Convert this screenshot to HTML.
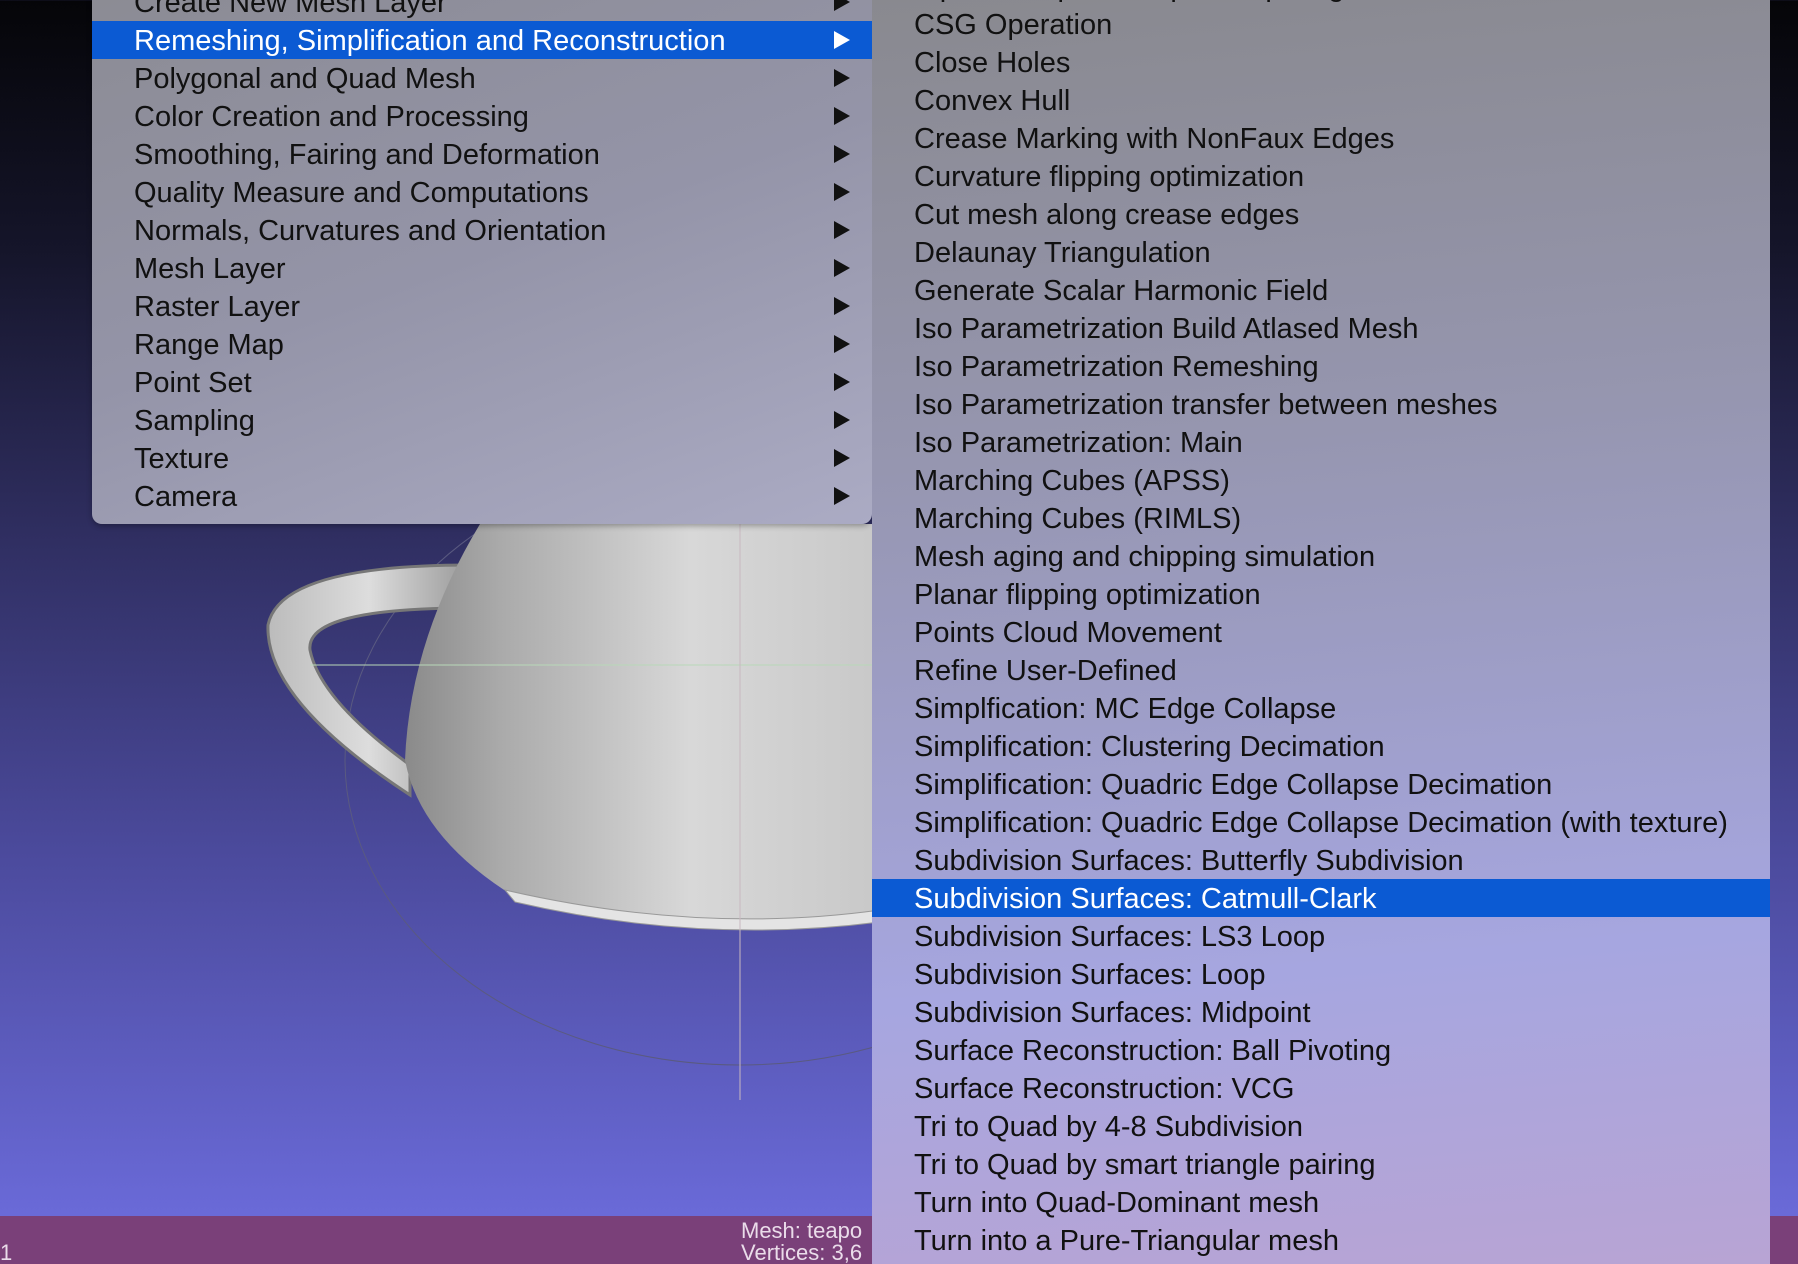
<!DOCTYPE html>
<html><head><meta charset="utf-8"><style>
*{margin:0;padding:0;box-sizing:border-box}
html,body{width:1798px;height:1264px;overflow:hidden}
body{position:relative;background:linear-gradient(180deg,#050508 0px,#15152a 250px,#2e2d5e 520px,#4b4a9c 850px,#6a6ad8 1216px);font-family:"Liberation Sans",sans-serif}
.status{position:absolute;left:0;top:1216px;width:1798px;height:48px;background:#7a4079;color:#eadcea;font-size:22px;line-height:22px}
.menu{position:absolute;overflow:hidden}
.row{position:absolute;left:0;right:0;height:38px;line-height:40px;font-size:29px;color:#111;white-space:nowrap}
.hl{background:#0b5ad3;color:#fff}
.arr{position:absolute;right:22px;top:10px;width:0;height:0;border-top:9px solid transparent;border-bottom:9px solid transparent;border-left:16px solid #111}
.hl .arr{border-left-color:#fff}
</style></head><body>
<svg width="1798" height="1264" style="position:absolute;left:0;top:0">
<defs>
<linearGradient id="body" x1="0" x2="1" y1="0" y2="0">
<stop offset="0" stop-color="#8a8a8a"/><stop offset="0.2" stop-color="#aaa"/><stop offset="0.6" stop-color="#d8d8d8"/><stop offset="1" stop-color="#c8c8c8"/></linearGradient>
<linearGradient id="hdl" x1="0" x2="1"><stop offset="0" stop-color="#bbb"/><stop offset="0.5" stop-color="#ddd"/><stop offset="1" stop-color="#999"/></linearGradient>
</defs>
<ellipse cx="740" cy="760" rx="395" ry="305" fill="none" stroke="#5a5a80" stroke-width="1"/>
<path d="M470 565 Q280 565 268 625 Q265 700 410 795 L410 765 Q320 700 310 650 Q305 608 470 608 Z" fill="url(#hdl)" stroke="#777" stroke-width="3"/>
<path d="M480 524 L880 524 L880 915 Q700 935 520 900 Q420 840 405 760 Q410 640 480 524 Z" fill="url(#body)"/>
<path d="M505 890 Q700 935 880 910 L880 922 Q700 945 515 902 Z" fill="#e4e4e4" stroke="#999" stroke-width="1"/>
<line x1="310" y1="665" x2="880" y2="665" stroke="#b8d8b8" stroke-width="1"/>
<line x1="740" y1="524" x2="740" y2="1100" stroke="#c8b8c0" stroke-width="1"/>
</svg>
<div class="status"><div style="position:absolute;left:741px;top:4px">Mesh: teapo</div><div style="position:absolute;left:741px;top:26px">Vertices: 3,6</div><div style="position:absolute;left:0;top:26px">1</div></div>

<div class="menu" style="left:92px;top:-20px;width:780px;height:544px;border-radius:0 0 10px 10px;background:linear-gradient(160deg,#8b8b93 0%,#9494a8 50%,#ababc4 100%);box-shadow:0 2px 6px rgba(0,0,0,.3)">
<div class="row" style="top:3px;padding-left:42px">Create New Mesh Layer<span class="arr"></span></div>
<div class="row hl" style="top:41px;padding-left:42px">Remeshing, Simplification and Reconstruction<span class="arr"></span></div>
<div class="row" style="top:79px;padding-left:42px">Polygonal and Quad Mesh<span class="arr"></span></div>
<div class="row" style="top:117px;padding-left:42px">Color Creation and Processing<span class="arr"></span></div>
<div class="row" style="top:155px;padding-left:42px">Smoothing, Fairing and Deformation<span class="arr"></span></div>
<div class="row" style="top:193px;padding-left:42px">Quality Measure and Computations<span class="arr"></span></div>
<div class="row" style="top:231px;padding-left:42px">Normals, Curvatures and Orientation<span class="arr"></span></div>
<div class="row" style="top:269px;padding-left:42px">Mesh Layer<span class="arr"></span></div>
<div class="row" style="top:307px;padding-left:42px">Raster Layer<span class="arr"></span></div>
<div class="row" style="top:345px;padding-left:42px">Range Map<span class="arr"></span></div>
<div class="row" style="top:383px;padding-left:42px">Point Set<span class="arr"></span></div>
<div class="row" style="top:421px;padding-left:42px">Sampling<span class="arr"></span></div>
<div class="row" style="top:459px;padding-left:42px">Texture<span class="arr"></span></div>
<div class="row" style="top:497px;padding-left:42px">Camera<span class="arr"></span></div>
</div>

<div class="menu" style="left:872px;top:0;width:898px;height:1264px;background:linear-gradient(175deg,#89898f 0%,#9696b0 35%,#a6a6e0 75%,#b8a4d4 100%)">
<div class="row" style="top:-33px;padding-left:42px">Alpha Complex/Shape computing</div>
<div class="row" style="top:5px;padding-left:42px">CSG Operation</div>
<div class="row" style="top:43px;padding-left:42px">Close Holes</div>
<div class="row" style="top:81px;padding-left:42px">Convex Hull</div>
<div class="row" style="top:119px;padding-left:42px">Crease Marking with NonFaux Edges</div>
<div class="row" style="top:157px;padding-left:42px">Curvature flipping optimization</div>
<div class="row" style="top:195px;padding-left:42px">Cut mesh along crease edges</div>
<div class="row" style="top:233px;padding-left:42px">Delaunay Triangulation</div>
<div class="row" style="top:271px;padding-left:42px">Generate Scalar Harmonic Field</div>
<div class="row" style="top:309px;padding-left:42px">Iso Parametrization Build Atlased Mesh</div>
<div class="row" style="top:347px;padding-left:42px">Iso Parametrization Remeshing</div>
<div class="row" style="top:385px;padding-left:42px">Iso Parametrization transfer between meshes</div>
<div class="row" style="top:423px;padding-left:42px">Iso Parametrization: Main</div>
<div class="row" style="top:461px;padding-left:42px">Marching Cubes (APSS)</div>
<div class="row" style="top:499px;padding-left:42px">Marching Cubes (RIMLS)</div>
<div class="row" style="top:537px;padding-left:42px">Mesh aging and chipping simulation</div>
<div class="row" style="top:575px;padding-left:42px">Planar flipping optimization</div>
<div class="row" style="top:613px;padding-left:42px">Points Cloud Movement</div>
<div class="row" style="top:651px;padding-left:42px">Refine User-Defined</div>
<div class="row" style="top:689px;padding-left:42px">Simplfication: MC Edge Collapse</div>
<div class="row" style="top:727px;padding-left:42px">Simplification: Clustering Decimation</div>
<div class="row" style="top:765px;padding-left:42px">Simplification: Quadric Edge Collapse Decimation</div>
<div class="row" style="top:803px;padding-left:42px">Simplification: Quadric Edge Collapse Decimation (with texture)</div>
<div class="row" style="top:841px;padding-left:42px">Subdivision Surfaces: Butterfly Subdivision</div>
<div class="row hl" style="top:879px;padding-left:42px">Subdivision Surfaces: Catmull-Clark</div>
<div class="row" style="top:917px;padding-left:42px">Subdivision Surfaces: LS3 Loop</div>
<div class="row" style="top:955px;padding-left:42px">Subdivision Surfaces: Loop</div>
<div class="row" style="top:993px;padding-left:42px">Subdivision Surfaces: Midpoint</div>
<div class="row" style="top:1031px;padding-left:42px">Surface Reconstruction: Ball Pivoting</div>
<div class="row" style="top:1069px;padding-left:42px">Surface Reconstruction: VCG</div>
<div class="row" style="top:1107px;padding-left:42px">Tri to Quad by 4-8 Subdivision</div>
<div class="row" style="top:1145px;padding-left:42px">Tri to Quad by smart triangle pairing</div>
<div class="row" style="top:1183px;padding-left:42px">Turn into Quad-Dominant mesh</div>
<div class="row" style="top:1221px;padding-left:42px">Turn into a Pure-Triangular mesh</div>
</div>
</body></html>
